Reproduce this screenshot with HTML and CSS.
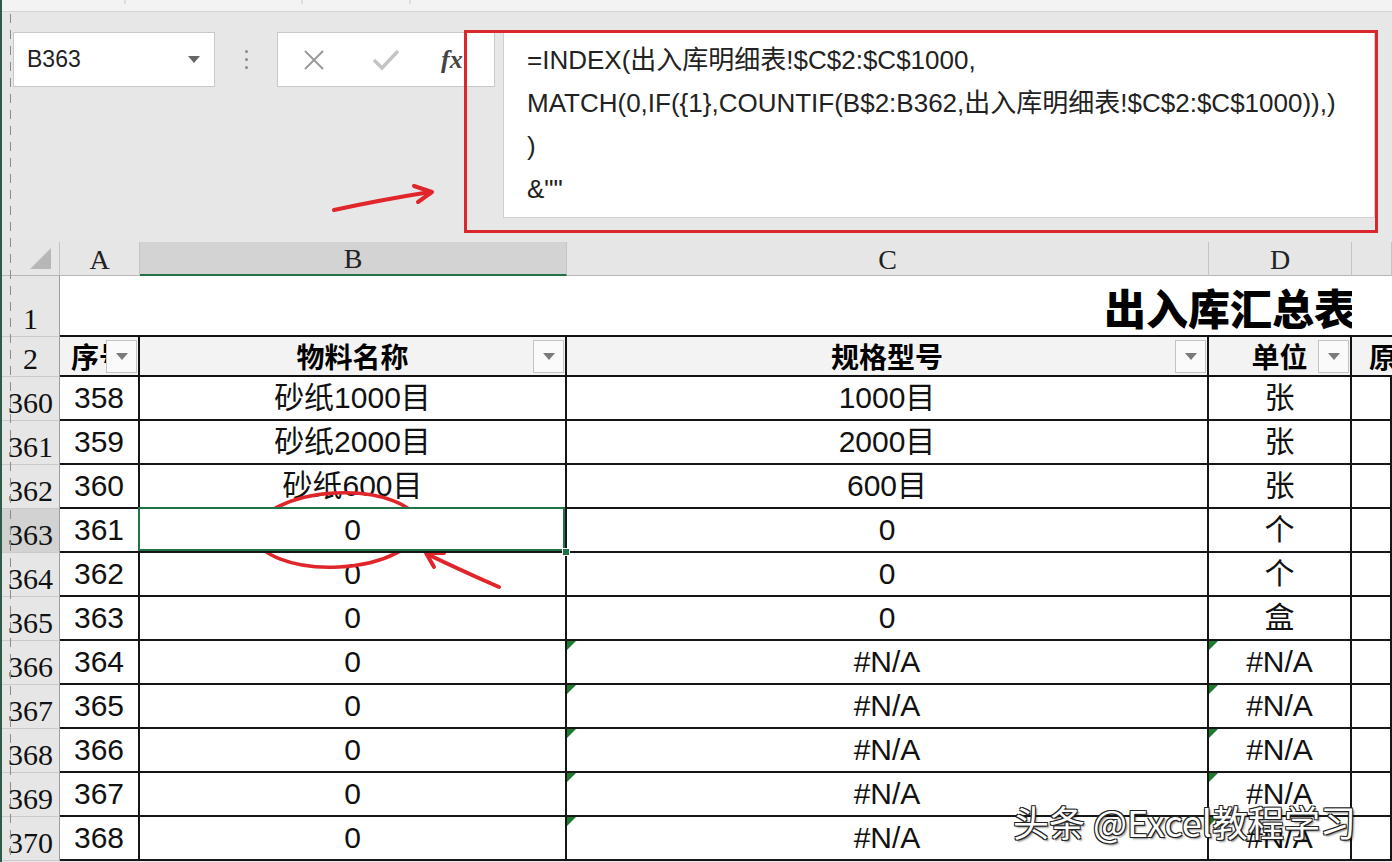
FILE: index.html
```html
<!DOCTYPE html>
<html lang="zh">
<head>
<meta charset="utf-8">
<title>出入库汇总表</title>
<link rel="stylesheet" href="styles.css">
</head>
<body>
<div class="app">
  <div class="topstrip"></div>
  <div class="fbar">
    <div class="namebox"><span>B363</span><span class="caret"></span></div>
    <div class="dots"><i></i><i></i><i></i></div>
    <div class="btns">
      <svg class="ico" width="26" height="26" viewBox="0 0 26 26"><path d="M4 4 L22 22 M22 4 L4 22" stroke="#9a9a9a" stroke-width="2" fill="none"/></svg>
      <svg class="ico" width="30" height="26" viewBox="0 0 30 26"><path d="M3 13 L11 21 L27 4" stroke="#c4c4c4" stroke-width="3.5" fill="none"/></svg>
      <span class="fx">fx</span>
    </div>
    <div class="finput">
      <div>=INDEX(出入库明细表!$C$2:$C$1000,</div>
      <div>MATCH(0,IF({1},COUNTIF(B$2:B362,出入库明细表!$C$2:$C$1000)),)</div>
      <div>)</div>
      <div>&amp;""</div>
    </div>
  </div>
  <div class="sheet">
    <div class="ch corner"><span class="tri"></span></div>
    <div class="ch">A</div>
    <div class="ch selc">B</div>
    <div class="ch">C</div>
    <div class="ch">D</div>
    <div class="ch"></div>

    <div class="rh">1</div>
    <div class="title">出入库汇总表</div>
    <div class="tblank"></div>

    <div class="rh">2</div>
    <div class="hd">序号<span class="dd"></span></div>
    <div class="hd">物料名称<span class="dd"></span></div>
    <div class="hd">规格型号<span class="dd"></span></div>
    <div class="hd">单位<span class="dd"></span></div>
    <div class="hd hl">原</div>

    <div class="rh">360</div><div class="c">358</div><div class="c">砂纸1000目</div><div class="c">1000目</div><div class="c">张</div><div class="c"></div>
    <div class="rh">361</div><div class="c">359</div><div class="c">砂纸2000目</div><div class="c">2000目</div><div class="c">张</div><div class="c"></div>
    <div class="rh">362</div><div class="c">360</div><div class="c">砂纸600目</div><div class="c">600目</div><div class="c">张</div><div class="c"></div>
    <div class="rh rsel">363</div><div class="c">361</div><div class="c sel">0<span class="handle"></span></div><div class="c">0</div><div class="c">个</div><div class="c"></div>
    <div class="rh">364</div><div class="c">362</div><div class="c">0</div><div class="c">0</div><div class="c">个</div><div class="c"></div>
    <div class="rh">365</div><div class="c">363</div><div class="c">0</div><div class="c">0</div><div class="c">盒</div><div class="c"></div>
    <div class="rh">366</div><div class="c">364</div><div class="c">0</div><div class="c err">#N/A</div><div class="c err">#N/A</div><div class="c"></div>
    <div class="rh">367</div><div class="c">365</div><div class="c">0</div><div class="c err">#N/A</div><div class="c err">#N/A</div><div class="c"></div>
    <div class="rh">368</div><div class="c">366</div><div class="c">0</div><div class="c err">#N/A</div><div class="c err">#N/A</div><div class="c"></div>
    <div class="rh">369</div><div class="c">367</div><div class="c">0</div><div class="c err">#N/A</div><div class="c err">#N/A</div><div class="c"></div>
    <div class="rh">370</div><div class="c">368</div><div class="c">0</div><div class="c err">#N/A</div><div class="c err">#N/A</div><div class="c"></div>
  </div>
</div>

<svg class="annot" width="1392" height="862" viewBox="0 0 1392 862">
  <rect x="0" y="0" width="2" height="862" fill="#2d5b45"/>
  <line x1="10.5" y1="14" x2="10.5" y2="862" stroke="#8c8c8c" stroke-width="1" stroke-dasharray="9 7"/>
  <line x1="125" y1="0" x2="125" y2="4" stroke="#c8c8c8"/>
  <line x1="302" y1="0" x2="302" y2="4" stroke="#c8c8c8"/>
  <line x1="410" y1="0" x2="410" y2="4" stroke="#c8c8c8"/>
  <rect x="465.5" y="31.5" width="911" height="200" fill="none" stroke="#d9272c" stroke-width="3"/>
  <path d="M334 210 Q380 200 430 192" stroke="#e0262b" stroke-width="4" fill="none" stroke-linecap="round"/>
  <path d="M414 186 L432 192 L418 202" stroke="#e0262b" stroke-width="4" fill="none" stroke-linecap="round" stroke-linejoin="round"/>
  <ellipse cx="337" cy="530" rx="82" ry="37" transform="rotate(-3 337 530)" fill="none" stroke="#e0262b" stroke-width="3.5"/>
  <path d="M499 587 Q460 570 427 554" stroke="#e0262b" stroke-width="4" fill="none" stroke-linecap="round"/>
  <path d="M444 553 L426 553 L434 567" stroke="#e0262b" stroke-width="4" fill="none" stroke-linecap="round" stroke-linejoin="round"/>
</svg>

<div class="watermark">头条 @Excel教程学习</div>
</body>
</html>
```

FILE: styles.css
```css
* {
  box-sizing: border-box;
  margin: 0;
  padding: 0;
}

html, body {
  width: 1392px;
  height: 862px;
  overflow: hidden;
}

body {
  position: relative;
  background: #e6e6e6;
  font-family: "Liberation Sans", "Noto Sans CJK SC", sans-serif;
  color: #111;
}

.app {
  display: flex;
  flex-direction: column;
  width: 1392px;
  height: 862px;
}

.topstrip {
  height: 12px;
  background: #f3f3f3;
  border-bottom: 1px solid #d4d4d4;
}

.fbar {
  height: 230px;
  display: flex;
  align-items: flex-start;
  padding: 20px 0 0 13px;
  background: #e7e7e7;
}

.namebox {
  width: 202px;
  height: 55px;
  background: #fff;
  border: 1px solid #c9c9c9;
  display: flex;
  align-items: center;
  justify-content: space-between;
  padding: 0 14px 0 13px;
  font-size: 23px;
  color: #222;
}

.caret {
  width: 0;
  height: 0;
  border-left: 6px solid transparent;
  border-right: 6px solid transparent;
  border-top: 7px solid #666;
}

.dots {
  width: 62px;
  height: 55px;
  display: flex;
  flex-direction: column;
  align-items: center;
  justify-content: center;
  gap: 5px;
}

.dots i {
  display: block;
  width: 3px;
  height: 3px;
  background: #8a8a8a;
  border-radius: 50%;
}

.btns {
  width: 218px;
  height: 55px;
  background: #fff;
  border: 1px solid #c9c9c9;
  display: flex;
  align-items: center;
  padding-left: 23px;
  gap: 44px;
}

.fx {
  font-family: "Liberation Serif", serif;
  font-style: italic;
  font-weight: 700;
  font-size: 26px;
  color: #444;
  margin-left: -4px;
}

.finput {
  margin-left: 8px;
  width: 872px;
  height: 186px;
  background: #fff;
  border: 1px solid #cfcfcf;
  padding: 6px 0 0 23px;
  font-size: 26px;
  line-height: 43px;
  color: #222;
  white-space: nowrap;
}

.sheet {
  display: grid;
  grid-template-columns: 60px 80px 427px 642px 143px 40px;
  grid-template-rows: 34px 61px 40px repeat(11, 44px);
  background: #fff;
  flex: none;
}

.ch {
  background: #e6e6e6;
  border-right: 1px solid #c4c4c4;
  border-bottom: 1px solid #b8b8b8;
  font-family: "Liberation Serif", serif;
  font-size: 28px;
  color: #222;
  display: flex;
  align-items: center;
  justify-content: center;
  line-height: 1;
  padding-top: 2px;
}

.ch.corner {
  align-items: flex-end;
  justify-content: flex-end;
  padding: 0 8px 6px 0;
}

.tri {
  width: 0;
  height: 0;
  border-left: 21px solid transparent;
  border-bottom: 21px solid #b7b7b7;
}

.ch.selc {
  background: #d3d3d3;
  border-bottom: 2px solid #217346;
}

.rh {
  background: #e6e6e6;
  border-right: 1px solid #9d9d9d;
  border-bottom: 1px solid #c9c9c9;
  font-family: "Liberation Serif", serif;
  font-size: 30px;
  color: #111;
  display: flex;
  align-items: flex-end;
  justify-content: center;
  line-height: 1;
  padding: 0 0 2px 2px;
}

.rh.rsel {
  background: #d2d2d2;
}

.title {
  grid-column: 2 / 6;
  background: #fff;
  border-bottom: 2px solid #111;
  font-family: "Noto Sans CJK SC", sans-serif;
  font-weight: 900;
  font-size: 42px;
  display: flex;
  align-items: center;
  justify-content: flex-end;
  margin-right: -4px;
  padding-top: 2px;
  color: #000;
}

.tblank {
  background: #fff;
  border-bottom: 2px solid #111;
}

.hd {
  position: relative;
  background: #f3f3f3;
  border-right: 2px solid #111;
  border-bottom: 2px solid #111;
  font-family: "Noto Sans CJK SC", sans-serif;
  font-weight: 700;
  font-size: 28px;
  color: #000;
  display: flex;
  align-items: center;
  justify-content: center;
  white-space: nowrap;
  overflow: hidden;
}

.hd.hl {
  justify-content: flex-start;
  padding-left: 17px;
  border-right: none;
}

.dd {
  position: absolute;
  right: 1px;
  top: 3px;
  width: 31px;
  height: 33px;
  background: #fafafa;
  border: 1px solid #c3c3c3;
  display: flex;
  align-items: center;
  justify-content: center;
}

.dd::after {
  content: "";
  width: 0;
  height: 0;
  border-left: 6px solid transparent;
  border-right: 6px solid transparent;
  border-top: 7px solid #7a7a7a;
}

.c {
  position: relative;
  background: #fff;
  border-right: 2px solid #161616;
  border-bottom: 2px solid #161616;
  font-size: 30px;
  color: #111;
  display: flex;
  align-items: center;
  justify-content: center;
  white-space: nowrap;
  line-height: 1;
}

.c.err::before {
  content: "";
  position: absolute;
  left: 0;
  top: 0;
  width: 0;
  height: 0;
  border-top: 9px solid #1f7a2e;
  border-right: 9px solid transparent;
}

.c.sel {
  z-index: 2;
}

.c.sel::after {
  content: "";
  position: absolute;
  left: -2px;
  top: -2px;
  right: 0;
  bottom: 0;
  border: 2px solid #217346;
}

.handle {
  position: absolute;
  right: -5px;
  bottom: -5px;
  width: 8px;
  height: 8px;
  background: #217346;
  border: 1px solid #fff;
  z-index: 3;
}

.annot {
  position: absolute;
  left: 0;
  top: 0;
  pointer-events: none;
}

.watermark {
  position: absolute;
  left: 1013px;
  top: 795px;
  font-family: "Noto Sans CJK SC", sans-serif;
  font-size: 36px;
  color: #fff;
  white-space: nowrap;
  text-shadow: 1px 1px 0 #222, -1px -1px 0 #222, 1px -1px 0 #222, -1px 1px 0 #222, 2px 2px 2px rgba(0,0,0,0.5);
}
```
